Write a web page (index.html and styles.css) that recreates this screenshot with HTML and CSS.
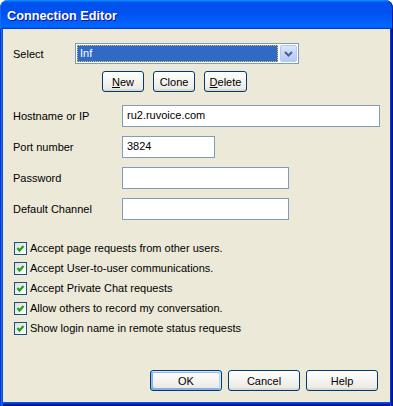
FILE: index.html
```html
<!DOCTYPE html>
<html lang="en">
<head>
  <meta charset="UTF-8">
  <title>Connection Editor</title>
  <link rel="stylesheet" href="styles.css">
</head>
<body>

  <div class="window">
    <div class="title-bar">Connection Editor</div>

    <div class="window-body">
      <div class="row select-row">
        <label class="label label-short">Select</label>
        <div class="combo">
          <span class="combo-value">Inf</span>
          <span class="combo-arrow">
            <svg width="9" height="6" viewBox="0 0 9 6">
              <polyline points="1,1 4.5,4.5 8,1" fill="none" stroke="#4d6185" stroke-width="2"/>
            </svg>
          </span>
        </div>
      </div>

      <div class="actions">
        <button class="btn btn-small"><u>N</u>ew</button>
        <button class="btn btn-small">Clone</button>
        <button class="btn btn-small btn-delete"><u>D</u>elete</button>
      </div>

      <div class="fields">
        <div class="row">
          <label class="label">Hostname or IP</label>
          <input class="field field-wide" type="text" value="ru2.ruvoice.com">
        </div>
        <div class="row">
          <label class="label">Port number</label>
          <input class="field field-port" type="text" value="3824">
        </div>
        <div class="row">
          <label class="label">Password</label>
          <input class="field field-mid" type="text" value="">
        </div>
        <div class="row">
          <label class="label">Default Channel</label>
          <input class="field field-mid" type="text" value="">
        </div>
      </div>

      <ul class="checks">
        <li><span class="check"><svg width="11" height="11" viewBox="0 0 11 11"><polyline points="2.5,5 4.5,7.5 8.5,3" fill="none" stroke="#21a121" stroke-width="2.2"/></svg></span>Accept page requests from other users.</li>
        <li><span class="check"><svg width="11" height="11" viewBox="0 0 11 11"><polyline points="2.5,5 4.5,7.5 8.5,3" fill="none" stroke="#21a121" stroke-width="2.2"/></svg></span>Accept User-to-user communications.</li>
        <li><span class="check"><svg width="11" height="11" viewBox="0 0 11 11"><polyline points="2.5,5 4.5,7.5 8.5,3" fill="none" stroke="#21a121" stroke-width="2.2"/></svg></span>Accept Private Chat requests</li>
        <li><span class="check"><svg width="11" height="11" viewBox="0 0 11 11"><polyline points="2.5,5 4.5,7.5 8.5,3" fill="none" stroke="#21a121" stroke-width="2.2"/></svg></span>Allow others to record my conversation.</li>
        <li><span class="check"><svg width="11" height="11" viewBox="0 0 11 11"><polyline points="2.5,5 4.5,7.5 8.5,3" fill="none" stroke="#21a121" stroke-width="2.2"/></svg></span>Show login name in remote status requests</li>
      </ul>

      <div class="footer">
        <button class="btn btn-wide btn-default">OK</button>
        <button class="btn btn-wide">Cancel</button>
        <button class="btn btn-wide">Help</button>
      </div>
    </div>
  </div>

</body>
</html>
```

FILE: styles.css
```css
body {
  margin: 0;
  padding: 0;
  background: #fff;
  font-family: 'Liberation Sans', Arial, sans-serif;
  font-size: 11px;
  color: #000;
}

.window {
  width: 393px;
  height: 406px;
  display: flex;
  flex-direction: column;
}

.title-bar {
  height: 29px;
  box-sizing: border-box;
  padding: 4px 7px 0;
  line-height: 25px;
  border-radius: 8px 8px 0 0;
  background: linear-gradient(180deg, #0997ff, #0053ee 8%, #0050ee 40%, #0066ff 88%, #0066ff 93%, #005bff 95%, #003dd7 96%, #003dd7);
  box-shadow: inset 1px 0 #166aee, inset -1px 0 #001ea0;
  color: #fff;
  font-size: 12.7px;
  font-weight: bold;
  text-shadow: 1px 1px #0f1089;
}

.window-body {
  flex: 1;
  display: flex;
  flex-direction: column;
  padding: 14px 15px 15px 13px;
  background: #ece9d8;
  box-shadow: inset 1px 0 #0831d9, inset 2px 0 #166aee, inset 3px 0 #0855dd,
    inset -1px 0 #00138c, inset -2px 0 #001ea0, inset -3px 0 #003bda,
    inset 0 -1px #00138c, inset 0 -2px #001ea0, inset 0 -3px #003bda, inset 0 -4px #0855dd;
}

.row {
  display: flex;
  align-items: center;
}

.label {
  width: 109px;
  flex-shrink: 0;
}

.label-short {
  width: 62px;
}

.select-row {
  height: 21px;
}

.combo {
  width: 224px;
  height: 21px;
  box-sizing: border-box;
  display: flex;
  padding: 1px;
  border: 1px solid #7f9db9;
  background: #fff;
}

.combo-value {
  flex: 1;
  margin-right: 2px;
  padding-left: 2px;
  line-height: 15px;
  background: #316ac5;
  color: #fff;
  border: 1px dotted #e8c560;
}

.combo-arrow {
  width: 15px;
  display: flex;
  align-items: center;
  justify-content: center;
  border: 1px solid #b7c9f3;
  border-radius: 2px;
  background: linear-gradient(180deg, #dbe5fd, #c1d3fb 60%, #b3c8f8);
}

.actions {
  display: flex;
  gap: 9px;
  margin-top: 7px;
  padding-left: 89px;
}

.btn {
  height: 21px;
  box-sizing: border-box;
  padding: 0;
  font-family: 'Liberation Sans', Arial, sans-serif;
  font-size: 11px;
  color: #000;
  border: 1px solid #003c74;
  border-radius: 3px;
  background: linear-gradient(180deg, #fff, #ecebe5 86%, #d8d0c4);
  cursor: pointer;
}

.btn-small {
  width: 42px;
}

.btn-delete {
  width: 43px;
}

.btn-wide {
  width: 72px;
}

.btn-default {
  box-shadow: inset -1px 1px #cee7ff, inset 1px 2px #98b8ea, inset -2px 2px #bcd4f6,
    inset 1px -1px #89ade4, inset 2px -2px #89ade4;
}

.fields {
  display: flex;
  flex-direction: column;
  gap: 9px;
  margin-top: 13px;
}

.field {
  height: 22px;
  flex-shrink: 0;
  box-sizing: border-box;
  margin: 0;
  padding: 0 4px 2px;
  font-family: 'Liberation Sans', Arial, sans-serif;
  font-size: 11px;
  color: #000;
  border: 1px solid #7f9db9;
  background: #fff;
  outline: none;
}

.field-wide {
  width: 258px;
}

.field-port {
  width: 93px;
}

.field-mid {
  width: 167px;
}

.checks {
  list-style: none;
  margin: 18px 0 0;
  padding: 0;
}

.checks li {
  height: 20px;
  display: flex;
  align-items: center;
}

.check {
  width: 13px;
  height: 13px;
  box-sizing: border-box;
  margin: 0 3px 0 1px;
  display: flex;
  align-items: center;
  justify-content: center;
  border: 1px solid #1c5180;
  background: linear-gradient(135deg, #dcdcd7, #fff);
}

.footer {
  margin-top: auto;
  display: flex;
  justify-content: flex-end;
  gap: 6px;
}
```
